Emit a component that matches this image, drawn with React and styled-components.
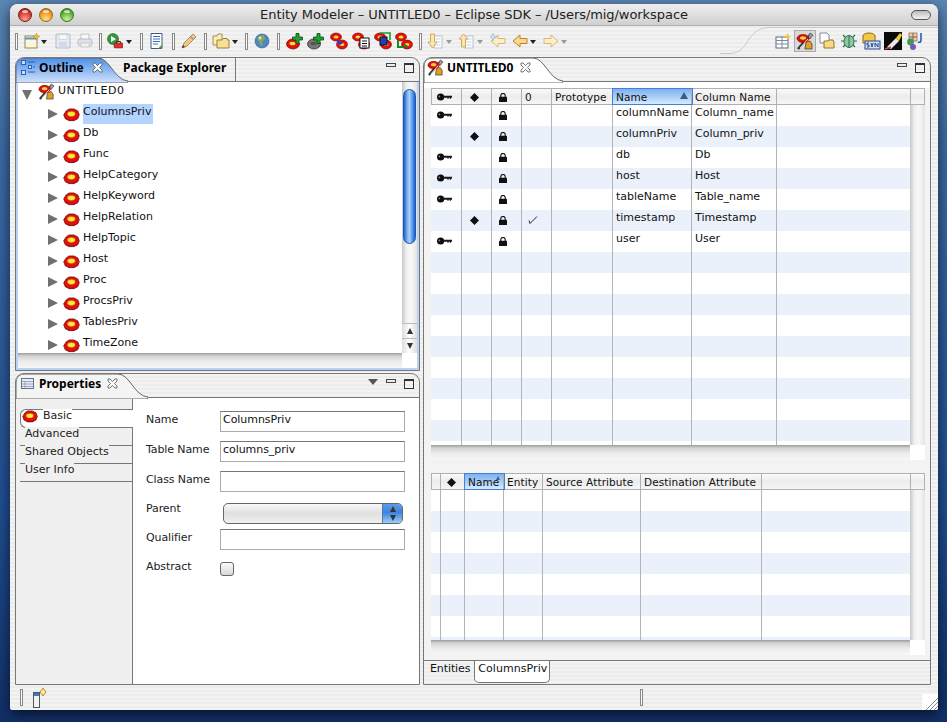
import React from "react";
import styled, { createGlobalStyle } from "styled-components";

const Global = createGlobalStyle`
  html, body { margin: 0; padding: 0; }
  body { width: 947px; height: 722px; overflow: hidden; font-family: "DejaVu Sans", "Liberation Sans", sans-serif; font-size: 11px; color: #111; }
  * { box-sizing: border-box; }
`;

const stripes = "repeating-linear-gradient(#f3f3f3 0 2px, #ececec 2px 4px)";

const Desktop = styled.div`
  width: 947px; height: 722px; padding: 4px 9px 12px 10px;
  background: linear-gradient(#5c86b4 0, #3c6ca6 20%, #1f4f92 70%, #123069 100%);
`;
const Win = styled.div`
  position: relative; width: 928px; height: 706px; display: flex; flex-direction: column;
  border-radius: 8px 8px 2px 2px; overflow: hidden; background: ${stripes};
  box-shadow: 0 4px 14px rgba(0,0,0,.65);
`;
const TitleBar = styled.div`
  position: relative; height: 22px; flex: none; display: flex; align-items: center; justify-content: center;
  background: linear-gradient(#eeeeee, #d0d0d0); border-bottom: 1px solid #b0b0b0;
  font-size: 13px; color: #222; letter-spacing: -.06px;
`;
const Lights = styled.div`
  position: absolute; left: 8px; top: 4px; display: flex; gap: 7px;
`;
const Light = styled.span`
  position: relative; width: 14px; height: 14px; border-radius: 50%; border: 1px solid ${p => p.$edge};
  background: radial-gradient(circle at 50% 85%, ${p => p.$hi} 0, ${p => p.$c} 60%, ${p => p.$d} 100%);
  &::after {
    content: ""; position: absolute; left: 3px; top: 1px; width: 6px; height: 3px; border-radius: 50%; background: rgba(255,255,255,.65);
  }
`;
const Pill = styled.span`
  position: absolute; right: 7px; top: 6px; width: 20px; height: 10px; border-radius: 5px; border: 1px solid #555;
  background: linear-gradient(#bbb, #f4f4f4);
`;
const ToolRow = styled.div`
  position: relative; height: 29px; flex: none; display: flex; align-items: center; padding: 1px 0 0 5px;
`;
const Handle = styled.span`
  width: 3px; height: 17px; flex: none; border: 1px solid #888; background: #fafafa;
  margin-left: ${p => p.$ml || 0}px;
`;
const Tool = styled.span`
  display: inline-flex; align-items: center; justify-content: center; flex: none;
  width: ${p => p.$w || 16}px; height: 20px; margin-left: ${p => p.$ml || 0}px;
  opacity: ${p => p.$dim ? .55 : 1};
`;
const Caret = styled.span`
  width: 0; height: 0; flex: none; border: 3px solid transparent; border-top: 4px solid ${p => p.$dim ? "#999" : "#222"};
  border-bottom: 0; margin: 2px 0 0 ${p => p.$ml || 0}px;
`;
const Spacer = styled.span`flex: 1;`;
const Curve = styled.svg`
  position: absolute; left: 710px; top: 1px;
`;
const Persp = styled.span`
  display: inline-flex; align-items: center; justify-content: center; width: 22px; height: 22px;
  border: ${p => p.$on ? "1px solid #aaa" : "0"}; background: ${p => p.$on ? "#d9d9d9" : "none"}; flex: none;
`;
const PerspSet = styled.div`
  display: flex; align-items: center; padding-right: 12px; position: relative;
`;

const Main = styled.div`
  flex: 1; min-height: 0; display: flex; gap: 3px; padding: 2px 7px 0 5px;
`;
const LeftCol = styled.div`
  width: 405px; display: flex; flex-direction: column; gap: 2px;
`;
const Panel = styled.div`
  display: flex; flex-direction: column; flex: ${p => p.$flex || "none"}; height: ${p => p.$h ? p.$h + "px" : "auto"};
  border: 1px solid #777; border-radius: 9px 9px 0 0; background: ${stripes}; overflow: hidden; min-width: 0;
`;
const TabHead = styled.div`
  height: 24px; flex: none; display: flex; align-items: flex-start; position: relative; border-bottom: 1px solid #777;
`;
const ViewTab = styled.div`
  position: relative; display: flex; align-items: center; height: 24px; padding: 0 0 5px ${p => p.$pl || 5}px;
  width: ${p => p.$w}px; flex: none; font-family: "Noto Sans", sans-serif; font-weight: bold; font-size: 12px; color: #000;
  letter-spacing: ${p => p.$ls || 0}px; z-index: 1;
`;
const TabText = styled.span`
  margin: 0 ${p => p.$mr}px 0 ${p => p.$ml}px;
`;
const TabShape = styled.svg`
  position: absolute; left: 0; top: 0; z-index: -1;
`;
const PlainTab = styled.div`
  display: flex; align-items: center; height: 23px; padding: 0 0 5px 0; margin-left: -5px; width: ${p => p.$w}px; flex: none;
  font-family: "Noto Sans", sans-serif; font-weight: bold; font-size: 12px;
  border-right: 1px solid #777; color: #000; z-index: 2;
`;
const ViewBtns = styled.div`
  position: absolute; right: 5px; top: 4px; display: flex; align-items: flex-start; gap: 8px;
`;
const MinBtn = styled.span`
  width: 10px; height: 4px; border: 1px solid #444; margin-top: 1px;
`;
const MaxBtn = styled.span`
  width: 10px; height: 10px; border: 1px solid #333; border-top-width: 2px; margin-top: 1px;
`;
const MenuBtn = styled.span`
  width: 0; height: 0; border: 5px solid transparent; border-top: 6px solid #555; border-bottom: 0; margin-top: 1px;
`;
const OutlineBody = styled.div`
  flex: 1; min-height: 0; display: flex; flex-direction: column; border: 2px solid #b9d1f5; border-top: 0; background: #fff;
`;
const TreeArea = styled.div`
  flex: 1; min-height: 0; display: flex;
`;
const Tree = styled.div`
  flex: 1; overflow: hidden; min-width: 0; padding-top: 1px;
`;
const RootRow = styled.div`
  height: 21px; display: flex; padding-left: 4px; align-items: flex-start;
`;
const TreeRow = styled.div`
  height: 21px; display: flex; align-items: flex-start; padding-left: 30px;
`;
const IconSlot = styled.span`
  display: inline-flex; flex: none; margin-top: ${p => p.$mt}px;
`;
const TreeLabel = styled.span`
  height: 20px; display: inline-block; margin-left: 3px; padding-top: 1px; line-height: 14px;
  background: ${p => p.$on ? "#b3d4ff" : "transparent"}; letter-spacing: ${p => p.$ls ?? 0}px; width: ${p => p.$on ? "70px" : "auto"};
`;
const Arrow = styled.span`
  width: 0; height: 0; flex: none; border-left: 10px solid #707070; border-top: 5.5px solid transparent; border-bottom: 5.5px solid transparent;
  margin: 5px 5px 0 0;
`;
const ArrowDown = styled.span`
  width: 0; height: 0; flex: none; border-top: 10px solid #707070; border-left: 5.5px solid transparent; border-right: 5.5px solid transparent;
  margin: 7px 6px 0 0;
`;
const VTrack = styled.div`
  width: ${p => p.$w || 15}px; flex: none; display: flex; flex-direction: column; align-items: center;
  background: linear-gradient(90deg, #c8c8c8, #f0f0f0 30%, #f8f8f8 60%, #e4e4e4);
`;
const Thumb = styled.div`
  width: 13px; height: 155px; margin-top: 7px; border-radius: 7px; border: 1px solid #1a55b8;
  background: linear-gradient(90deg, #1f63d2, #8dbcf2 35%, #a9d0f8 50%, #5c9ae8 75%, #1e62d0);
`;
const TrackGap = styled.div`flex: 1;`;
const ArrowBtn = styled.div`
  width: 15px; height: 15px; display: flex; align-items: center; justify-content: center; background: linear-gradient(90deg, #ddd, #fff 50%, #ddd);
  border-top: 1px solid #bbb;
`;
const UpTri = styled.span`
  width: 0; height: 0; border: 3.5px solid transparent; border-bottom: 6px solid #333; border-top: 0;
`;
const DownTri = styled.span`
  width: 0; height: 0; border: 3.5px solid transparent; border-top: 6px solid #333; border-bottom: 0;
`;
const HTrack = styled.div`
  height: 15px; flex: none; display: flex; justify-content: flex-end;
  background: linear-gradient(#9c9c9c 0, #d2d2d2 20%, #ececec 55%, #f6f6f6 100%);
`;
const Corner = styled.div`width: 15px; background: #fff;`;

const PropBody = styled.div`
  flex: 1; min-height: 0; display: flex; background: #fff;
`;
const SideTabs = styled.div`
  width: 117px; flex: none; background: #f0f0f0; border-right: 1px solid #777; padding-top: 11px;
`;
const SideTab = styled.div`
  display: flex; align-items: flex-start; height: 18px; margin: 0 -1px 0 4px; padding-left: 5px;
  border-bottom: 1px solid #777;
  ${p => p.$on && "height: 19px; background: #fff; border-top: 1px solid #777; border-left: 1px solid #777; border-radius: 6px 0 0 6px; padding-left: 1px; position: relative;"}
`;
const SideLabel = styled.span`
  position: relative; margin-top: -1px; height: 14px; line-height: 14px; color: #222; background: ${p => p.$on ? "#fff" : "#f0f0f0"};
  margin-left: ${p => p.$on ? 5 : 0}px;
`;
const Form = styled.div`
  flex: 1; padding: 13px 14px 0 13px;
`;
const FormRow = styled.div`
  display: flex; height: ${p => p.$h}px; align-items: flex-start;
`;
const FormLabel = styled.label`
  width: 74px; flex: none; padding-top: ${p => p.$pt ?? 0}px; line-height: 14px; letter-spacing: -.1px; color: #222;
`;
const Field = styled.div`
  width: 185px; height: 21px; border: 1px solid #aaa; border-top-color: #777; padding: 0 2px; line-height: 15px; letter-spacing: -.05px; background: #fff; color: #111;
`;
const Select = styled.div`
  width: 180px; height: 21px; margin: 2px 0 0 3px; display: flex; justify-content: flex-end; border: 1px solid #666; border-radius: 5px; overflow: hidden;
  background: linear-gradient(#f8f8f8, #e0e0e0 50%, #f0f0f0);
`;
const SelectBtn = styled.div`
  width: 20px; display: flex; flex-direction: column; align-items: center; justify-content: center; gap: 3px;
  background: linear-gradient(#5e9be8, #3f83dd 45%, #9bcdf8 100%); border-left: 1px solid #5577aa;
`;
const Check = styled.span`
  display: block; width: 14px; height: 14px; margin-top: 4px; border: 1px solid #666; border-radius: 3px;
  background: linear-gradient(#fafafa, #d9d9d9);
`;

const RightPanel = styled(Panel)`flex: 1;`;
const EditorArea = styled.div`
  flex: 1; min-height: 0; display: flex; flex-direction: column; padding: 0 5px 0 7px;
  background: #f3f3f3;
`;
const WhiteStrip = styled.div`
  height: 6px; flex: none; margin: 0 -5px 0 -7px; background: #fff;
`;
const TableWrap = styled.div`
  display: flex; flex-direction: column; flex: none; height: ${p => p.$h}px; margin-top: ${p => p.$mt || 0}px;
`;
const HeadRow = styled.div`
  height: 17px; flex: none; display: flex; border: 1px solid #b0b0b0; background: linear-gradient(#fafafa, #ececec 50%, #f6f6f6);
`;
const HeadCell = styled.div`
  position: relative; width: ${p => p.$w}px; flex: none; display: flex; align-items: center;
  padding-left: ${p => p.$pad ?? 3}px; border-right: 1px solid #b0b0b0; letter-spacing: .1px; font-size: 10.5px; white-space: nowrap; line-height: 14px; padding-top: 1px;
  ${p => p.$on && "background: linear-gradient(#7fb0ee, #a8cdf6 50%, #d6ebff); box-shadow: 0 0 0 1px #3d80df;"}
`;
const SortTri = styled.span`
  position: absolute; right: 3px; top: ${p => p.$small ? 2 : 3}px; width: 0; height: 0;
  border: ${p => p.$small ? 2 : 4}px solid transparent; border-bottom: ${p => p.$small ? 4 : 7}px solid #3a5a8a; border-top: 0;
`;
const RowsArea = styled.div`
  flex: 1; min-height: 0; display: flex;
`;
const Rows = styled.div`
  flex: 1; min-width: 0; overflow: hidden;
`;
const Row = styled.div`
  height: 21px; display: flex; padding-left: 1px; background: ${p => p.$alt ? "#ebf1fb" : "#fff"};
`;
const Cell = styled.div`
  width: ${p => p.$w}px; flex: none; display: flex;
  padding: ${p => p.$pad != null ? `6px 0 0 ${p.$pad}px` : "1px 0 0 3px"}; border-right: 1px solid #b4b4b4; line-height: 14px; white-space: nowrap; overflow: hidden;
`;
const BottomTabs = styled.div`
  flex: 1; display: flex; align-items: flex-start; margin: 5px -5px 0 -7px; border-top: 1px solid #777; background: ${stripes};
`;
const EdTab = styled.div`
  height: 22px; padding: 0 2px 0 ${p => p.$on ? 3 : 6}px; line-height: 15px; flex: none; letter-spacing: ${p => p.$on ? .05 : -.1}px;
  ${p => p.$on && "background: #fff; border: 1px solid #777; border-top: 0; border-radius: 0 0 5px 5px; margin-left: 2px;"}
`;
const StatusBar = styled.div`
  height: 25px; flex: none; display: flex; align-items: center; padding-left: 10px; position: relative;
`;
const StatusGap = styled.span`width: ${p => p.$w}px; flex: none;`;
const Grip = styled.svg`
  position: absolute; right: 0; bottom: 0;
`;

/* ---------- drawings ---------- */
const Entity = ({ w = 17 }) => (
  <svg width={w} height={w * 0.8} viewBox="0 0 17 14" style={{ flex: "none" }}>
    <path d="M3 3 L6 1 L11 1 L15 3 L16.5 7 L15 11 L11 13 L6 13 L2 11 L.5 7Z" fill="#e01010" stroke="#7a0505" strokeWidth=".8" />
    <path d="M2 10 Q8 15 15 10 L11 13 L6 13Z" fill="#8a0808" />
    <ellipse cx="8.3" cy="6.2" rx="4" ry="2.5" fill="#ffe83a" stroke="#b08800" strokeWidth=".4" />
  </svg>
);
const Modeler = ({ s = 18 }) => (
  <svg width={s} height={s} viewBox="0 0 18 18" style={{ flex: "none" }}>
    <path d="M10 10 L14 9 L16 12 L16 17 L9 17Z" fill="#e0a020" stroke="#333" strokeWidth=".7" />
    <path d="M2 17 L14 3" stroke="#333" strokeWidth="2.4" />
    <path d="M14 1 L17 3 L14 7 L12 5Z" fill="#999" stroke="#333" strokeWidth=".6" />
    <ellipse cx="7" cy="6.5" rx="6" ry="4" fill="#d81010" stroke="#700" strokeWidth=".6" />
    <ellipse cx="7" cy="6" rx="3" ry="1.7" fill="#f6d040" />
    <path d="M4 16 L12 7" stroke="#eee" strokeWidth=".9" />
  </svg>
);
const Key = () => (
  <svg width="15" height="8" viewBox="0 0 15 8" style={{ flex: "none" }}>
    <ellipse cx="3.6" cy="4" rx="3.6" ry="3.6" fill="#0c0c0c" />
    <path d="M6 2.8 H15 V4.8 H14 V5.8 H12.8 V4.8 H11.6 V5.8 H10.4 V4.8 H6Z" fill="#1a1a1a" />
    <circle cx="2.4" cy="3.4" r=".9" fill="#888" />
  </svg>
);
const Diamond = () => (
  <svg width="9" height="9" viewBox="0 0 9 9" style={{ flex: "none" }}><path d="M4.5 0 L9 4.5 L4.5 9 L0 4.5Z" fill="#111" /></svg>
);
const Lock = () => (
  <svg width="8" height="9" viewBox="0 0 8 9" style={{ flex: "none" }}>
    <path d="M1.8 4 V2.6 A2.2 2.2 0 0 1 6.2 2.6 V4" fill="none" stroke="#111" strokeWidth="1.1" />
    <rect x="0" y="3.8" width="8" height="5.2" rx=".6" fill="#111" />
  </svg>
);
const Tick = () => (
  <svg width="10" height="8" viewBox="0 0 10 8" style={{ flex: "none" }}>
    <path d="M1 4.5 L2 7.5 L9 .5" fill="none" stroke="#222" strokeWidth="1" />
  </svg>
);
const CloseX = () => (
  <svg width="11" height="11" viewBox="0 0 11 11" style={{ flex: "none" }}>
    <path d="M1 1 L3 1 L5.5 3.5 L8 1 L10 1 L10 3 L7.5 5.5 L10 8 L10 10 L8 10 L5.5 7.5 L3 10 L1 10 L1 8 L3.5 5.5 L1 3Z" fill="#f8f8f8" stroke="#555" strokeWidth=".8" />
  </svg>
);
const OutlineIco = () => (
  <svg width="14" height="15" viewBox="0 0 14 15" style={{ flex: "none" }}>
    <g fill="#cfe0fa" stroke="#2860b8" strokeWidth="1">
      <rect x=".5" y=".5" width="4" height="4" /><rect x=".5" y="10.5" width="4" height="4" /><rect x="7.5" y="5.5" width="3" height="3" />
    </g>
    <path d="M7 2 H14 M12 7 H14 M7 12 H14" stroke="#2860b8" strokeWidth="1" />
  </svg>
);
const PropsIco = () => (
  <svg width="13" height="11" viewBox="0 0 13 11" style={{ flex: "none" }}>
    <rect x=".5" y=".5" width="12" height="10" fill="#e6edf6" stroke="#66748a" />
    <path d="M1 3.5 H12 M1 6 H12 M1 8.5 H12 M4 3 V10" stroke="#8a97ab" strokeWidth=".8" />
  </svg>
);
const Svg = ({ children, w = 16, h = 16 }) => <svg width={w} height={h} viewBox={`0 0 ${w} ${h}`}>{children}</svg>;
const IcoNew = () => <Svg><rect x="1" y="3" width="12" height="12" fill="#fbf6d8" stroke="#8a8a60" /><path d="M1 5.5 H13" stroke="#6b8cc0" strokeWidth="2" /><path d="M12.5 0 L13.5 2.5 L16 3.5 L13.5 4.5 L12.5 7 L11.5 4.5 L9 3.5 L11.5 2.5Z" fill="#f4c820" stroke="#a07810" strokeWidth=".4" /></Svg>;
const IcoSave = () => <Svg><rect x="1" y="1" width="14" height="14" rx="1" fill="#dfe8f4" stroke="#7b93b8" /><rect x="4" y="1.5" width="8" height="5" fill="#fff" stroke="#9ab" strokeWidth=".6" /><rect x="4" y="9" width="8" height="6" fill="#b9c9e0" /></Svg>;
const IcoPrint = () => <Svg><path d="M4 1 H12 V7 H4Z" fill="#fff" stroke="#99a" /><rect x="1" y="6" width="14" height="7" rx="2" fill="#cdd6e4" stroke="#8c9ab0" /><rect x="4" y="10" width="8" height="4" fill="#eee" stroke="#99a" strokeWidth=".6" /></Svg>;
const IcoRun = () => <Svg><circle cx="6" cy="6" r="5.5" fill="#2e9a3c" stroke="#175c20" strokeWidth=".6" /><path d="M4 3 L9 6 L4 9Z" fill="#fff" /><rect x="7" y="10" width="9" height="5" rx="1" fill="#d83030" stroke="#701010" strokeWidth=".5" /><path d="M9.5 10 V8.5 H13.5 V10" fill="none" stroke="#701010" /></Svg>;
const IcoDoc = () => <Svg><path d="M2 .5 H13 V15.5 H2Z" fill="#fff" stroke="#3c5a80" /><path d="M4 3.5 H11 M4 6 H11 M4 8.5 H11 M4 11 H9" stroke="#3c6cc0" /><path d="M9 15.5 L13 11.5 V15.5Z" fill="#4a9a4a" /></Svg>;
const IcoPencil = () => <Svg><path d="M1 15 L3 10 L12 1 L15 4 L6 13Z" fill="#f2c78a" stroke="#a67830" strokeWidth=".8" /><path d="M9.5 3.5 L12.5 6.5" stroke="#999" strokeWidth="1.6" /><path d="M1 15 L2 12 L4 14Z" fill="#333" /></Svg>;
const IcoFolder = () => <svg width="18" height="16" viewBox="0 0 18 16"><path d="M1 3 H5 L6 1 H10 V12 H1Z" fill="#fbeeb8" stroke="#a88c50" /><path d="M5 7 H10 L11 5.5 H15 L15.5 7 H17 V15 H5Z" fill="#f7e09a" stroke="#a07c30" /></svg>;
const IcoGlobe = () => <Svg><circle cx="8" cy="8" r="7" fill="#4a86c8" stroke="#2b5a90" strokeWidth=".6" /><path d="M5 3 L10 2 L11 6 L8 9 L9 13 L6 12 L5 8 L3 6Z" fill="#8aa850" /><circle cx="6" cy="5" r="1.4" fill="#fff" opacity=".7" /></Svg>;
const IcoAdd = ({ v = 0 }) => (
  <svg width="18" height="18" viewBox="0 0 18 18">
    {v === 1
      ? <ellipse cx="7" cy="12" rx="6.5" ry="5" fill="#777" stroke="#222" strokeWidth=".7" />
      : <ellipse cx="7" cy="12" rx="6.5" ry="5" fill="#e01010" stroke="#700" strokeWidth=".7" />}
    <ellipse cx="6.5" cy="11.5" rx="3" ry="1.8" fill={v === 1 ? "#555" : "#f8dc30"} />
    <path d="M10 1.5 H13 V5 H16.5 V8 H13 V11.5 H10 V8 H6.5 V5 H10Z" fill="#22a030" stroke="#0a4a10" strokeWidth=".8" />
  </svg>
);
const IcoBlob2 = ({ v }) => (
  <svg width="18" height="18" viewBox="0 0 18 18">
    <ellipse cx="6" cy="5" rx="5.5" ry="4" fill="#e01010" stroke="#700" strokeWidth=".6" />
    <ellipse cx="12" cy="12.5" rx="5.5" ry="4.5" fill="#e01010" stroke="#700" strokeWidth=".6" />
    <ellipse cx="6" cy="5" rx="2.5" ry="1.5" fill="#f8dc30" />
    <ellipse cx="12" cy="12.5" rx="2.5" ry="1.5" fill="#f8dc30" />
    {v === 1 && <path d="M5 7 L13 11 L10 13Z" fill="#1c40d8" />}
    {v === 2 && <g><rect x="8" y="6" width="9" height="10" fill="#fff" stroke="#111" /><path d="M10 9 H15 M10 11.5 H15 M10 14 H15" stroke="#111" /></g>}
    {v === 3 && <g><rect x="6" y="5" width="7" height="8" fill="#2040b0" stroke="#111" /><path d="M6 1 H16 V8" fill="none" stroke="#1a9a30" strokeWidth="1.6" /></g>}
    {v === 4 && <g><path d="M3 8 V15 H9 M9 12.5 L13 15" fill="none" stroke="#1a8a20" strokeWidth="2" /></g>}
  </svg>
);
const IcoDown = ({ up }) => (
  <Svg>
    <rect x="7" y="3" width="8" height="12" fill="#fff" stroke="#b8c2d2" />
    <path d="M8.5 6 H13.5 M8.5 9 H13.5 M8.5 12 H13.5" stroke="#c5cfde" />
    {up
      ? <path d="M5.5 1 L10 6 H7.5 V14 H3.5 V6 H1Z" fill="#fbe6b0" stroke="#cfa860" />
      : <path d="M3.5 1 H7.5 V9 H10 L5.5 15 L1 9 H3.5Z" fill="#fbe6b0" stroke="#cfa860" />}
  </Svg>
);
const IcoLeft = ({ dim, star }) => (
  <Svg>
    <path d="M1 8 L8 2 V5.5 H15 V10.5 H8 V14Z" fill={dim ? "#fdeec8" : "#fbd98a"} stroke={dim ? "#d8b878" : "#b8822a"} />
    {star && <path d="M3 0 L4 3 L7 4 L4 5 L3 8 L2 5 L-1 4 L2 3Z" fill="#cfe0f8" stroke="#7b9bd0" strokeWidth=".4" />}
  </Svg>
);
const IcoRight = () => <Svg><path d="M15 8 L8 2 V5.5 H1 V10.5 H8 V14Z" fill="#fdeec8" stroke="#d8b878" /></Svg>;
const PTable = () => <Svg><rect x="1" y="4" width="12" height="11" fill="#fff" stroke="#5a6a80" /><path d="M1 7.5 H13 M1 11 H13 M7 4 V15" stroke="#7a8aa0" /><path d="M12.5 0 L13.5 2.5 L16 3.5 L13.5 4.5 L12.5 7 L11.5 4.5 L9 3.5 L11.5 2.5Z" fill="#f4c820" /></Svg>;
const PFolder = () => <svg width="18" height="18" viewBox="0 0 18 18"><path d="M2 1 H9 L11 3 V11 H2Z" fill="#fff" stroke="#7a8aa0" /><path d="M6 9 H10 L11 8 H15 L16 10 V16 H6Z" fill="#f7d98a" stroke="#9a7020" /></svg>;
const PBug = () => <svg width="18" height="18" viewBox="0 0 18 18"><path d="M3 3 L6 6 M15 3 L12 6 M1 9 H4 M14 9 H17 M3 15 L6 12 M15 15 L12 12" stroke="#2a6a50" strokeWidth="1.2" /><ellipse cx="9" cy="9.5" rx="5" ry="6" fill="#8fc8a0" stroke="#2a6a50" /><path d="M9 4 V15" stroke="#2a6a50" /></svg>;
const PSvn = () => <svg width="20" height="18" viewBox="0 0 20 18"><ellipse cx="8" cy="4" rx="6" ry="3" fill="#f4c840" stroke="#8a6a10" /><path d="M2 4 V11 H14 V4" fill="#f4c840" stroke="#8a6a10" /><rect x="4" y="9" width="15" height="8" fill="#cfe0f4" stroke="#2a4a80" /><path d="M6 15 H8 V13 H6 V11 H8 M10 11 L11 15 L12 11 M14 15 V11 L17 15 V11" fill="none" stroke="#1a3a80" strokeWidth=".9" /></svg>;
const PMark = () => <svg width="18" height="18" viewBox="0 0 18 18"><rect width="18" height="18" fill="#0a0a0a" /><path d="M3 15 L12 6 L15 9 L7 17Z" fill="#e8e8e8" /><path d="M12 6 L16 1 L18 3 L15 9Z" fill="#f4d020" /><path d="M1 17 L7 15" stroke="#e04040" strokeWidth="1.4" /></svg>;
const PJava = () => <svg width="18" height="18" viewBox="0 0 18 18"><rect x="3" y="1" width="8" height="8" fill="#e8d0c0" stroke="#8a5a3a" strokeWidth=".7" /><path d="M7 1 V9 M3 5 H11" stroke="#8a5a3a" /><circle cx="4.5" cy="10" r="3.4" fill="#3c9a58" /><circle cx="7" cy="15" r="3" fill="#7858b8" /><path d="M15 1 V8 Q15 11 12 10" fill="none" stroke="#2a5ab8" strokeWidth="1.6" /></svg>;
const Widget = () => <svg width="16" height="20" viewBox="0 0 16 20"><rect x=".5" y="4.5" width="6" height="15" fill="#eef2f8" stroke="#555" /><rect x="1" y="5" width="5" height="3" fill="#3c78c8" /><path d="M10 0 L13 4 L10 8 L7 4Z" fill="#f8e8a0" stroke="#c08a20" /></svg>;

/* ---------- data ---------- */
const treeItems = ["ColumnsPriv", "Db", "Func", "HelpCategory", "HelpKeyword", "HelpRelation", "HelpTopic", "Host", "Proc", "ProcsPriv", "TablesPriv", "TimeZone"];
const topCols = [30, 30, 30, 30, 61, 79, 85, 134];
const iconPad = [5, 8, 7, 6];
const topHead = [<Key />, <Diamond />, <Lock />, "0", "Prototype", "Name", "Column Name", ""];
const attrs = [
  { k: 1, n: "columnName", c: "Column_name" },
  { d: 1, n: "columnPriv", c: "Column_priv" },
  { k: 1, n: "db", c: "Db" },
  { k: 1, n: "host", c: "Host" },
  { k: 1, n: "tableName", c: "Table_name" },
  { d: 1, t: 1, n: "timestamp", c: "Timestamp" },
  { k: 1, n: "user", c: "User" },
];
const botCols = [9, 24, 39, 39, 98, 121, 149];
const botHead = ["", <Diamond />, "Name", "Entity", "Source Attribute", "Destination Attribute", ""];

const tabPath = (w) => `M0 24 V9 Q0 0 9 0 H${w - 30} C${w - 18} 0 ${w - 14} 22 ${w} 23 V25 H0 Z`;

export default function App() {
  return (
    <Desktop>
      <Global />
      <Win>
        <TitleBar>
          <Lights>
            <Light $c="#d83a30" $d="#8a1410" $hi="#ffa090" $edge="#7a1a16" />
            <Light $c="#ef9a20" $d="#a8600c" $hi="#ffdc90" $edge="#9a6a10" />
            <Light $c="#5cb030" $d="#2e7412" $hi="#c8f4a0" $edge="#3a7a1c" />
          </Lights>
          Entity Modeler – UNTITLED0 – Eclipse SDK – /Users/mig/workspace
          <Pill />
        </TitleBar>
        <ToolRow>
          <Handle />
          <Tool $ml={6}><IcoNew /></Tool><Caret $ml={1} />
          <Tool $dim $ml={8}><IcoSave /></Tool>
          <Tool $dim $ml={6}><IcoPrint /></Tool>
          <Handle $ml={6} />
          <Tool $ml={5}><IcoRun /></Tool><Caret $ml={3} />
          <Handle $ml={8} />
          <Tool $ml={6}><IcoDoc /></Tool>
          <Handle $ml={7} />
          <Tool $ml={6}><IcoPencil /></Tool>
          <Handle $ml={7} />
          <Tool $ml={5} $w={18}><IcoFolder /></Tool><Caret $ml={2} />
          <Handle $ml={7} />
          <Tool $ml={6}><IcoGlobe /></Tool>
          <Handle $ml={7} />
          <Tool $ml={6} $w={18}><IcoAdd /></Tool>
          <Tool $ml={3} $w={18}><IcoAdd v={1} /></Tool>
          <Tool $ml={5} $w={18}><IcoBlob2 v={1} /></Tool>
          <Tool $ml={4} $w={18}><IcoBlob2 v={2} /></Tool>
          <Tool $ml={4} $w={18}><IcoBlob2 v={3} /></Tool>
          <Tool $ml={3} $w={18}><IcoBlob2 v={4} /></Tool>
          <Handle $ml={6} />
          <Tool $ml={5}><IcoDown /></Tool><Caret $dim $ml={3} />
          <Tool $ml={6}><IcoDown up /></Tool><Caret $dim $ml={3} />
          <Tool $ml={7}><IcoLeft dim star /></Tool>
          <Tool $ml={6}><IcoLeft /></Tool><Caret $ml={2} />
          <Tool $ml={7}><IcoRight /></Tool><Caret $dim $ml={2} />
          <Spacer />
          <Curve width="218" height="28" viewBox="0 0 218 28">
            <path d="M0 26.5 H10 C 30 26.5 25 .5 50 .5 H218" fill="none" stroke="#c8c8c8" strokeWidth="1" />
          </Curve>
          <PerspSet>
            <Persp><PTable /></Persp>
            <Persp $on><Modeler s={18} /></Persp>
            <Persp><PFolder /></Persp>
            <Persp><PBug /></Persp>
            <Persp><PSvn /></Persp>
            <Persp><PMark /></Persp>
            <Persp><PJava /></Persp>
          </PerspSet>
        </ToolRow>
        <Main>
          <LeftCol>
            <Panel $h={314}>
              <TabHead>
                <ViewTab $w={112}>
                  <TabShape width="112" height="25" viewBox="0 0 112 25">
                    <defs>
                      <linearGradient id="blueTab" x1="0" y1="0" x2="0" y2="1">
                        <stop offset="0" stopColor="#4d8fe8" /><stop offset="1" stopColor="#d3e3fb" />
                      </linearGradient>
                    </defs>
                    <path d={tabPath(112)} fill="url(#blueTab)" stroke="#666" />
                  </TabShape>
                  <OutlineIco />
                  <TabText $ml={4} $mr={8}>Outline</TabText>
                  <CloseX />
                </ViewTab>
                <PlainTab $w={113}>Package Explorer</PlainTab>
                <ViewBtns><MinBtn /><MaxBtn /></ViewBtns>
              </TabHead>
              <OutlineBody>
                <TreeArea>
                  <Tree>
                    <RootRow>
                      <ArrowDown />
                      <IconSlot $mt={0}><Modeler s={17} /></IconSlot>
                      <TreeLabel $ls={.55}>UNTITLED0</TreeLabel>
                    </RootRow>
                    {treeItems.map((t, i) => (
                      <TreeRow key={t}>
                        <Arrow />
                        <IconSlot $mt={4}><Entity /></IconSlot>
                        <TreeLabel $on={i === 0}>{t}</TreeLabel>
                      </TreeRow>
                    ))}
                  </Tree>
                  <VTrack>
                    <Thumb />
                    <TrackGap />
                    <ArrowBtn><UpTri /></ArrowBtn>
                    <ArrowBtn><DownTri /></ArrowBtn>
                  </VTrack>
                </TreeArea>
                <HTrack><Corner /></HTrack>
              </OutlineBody>
            </Panel>
            <Panel $flex="1">
              <TabHead>
                <ViewTab $w={132}>
                  <TabShape width="132" height="25" viewBox="0 0 132 25">
                    <path d={tabPath(132)} fill="#f4f4f4" stroke="#666" />
                  </TabShape>
                  <PropsIco />
                  <TabText $ml={5} $mr={6}>Properties</TabText>
                  <CloseX />
                </ViewTab>
                <ViewBtns><MenuBtn /><MinBtn /><MaxBtn /></ViewBtns>
              </TabHead>
              <PropBody>
                <SideTabs>
                  <SideTab $on><Entity w={16} /><SideLabel $on>Basic</SideLabel></SideTab>
                  <SideTab><SideLabel>Advanced</SideLabel></SideTab>
                  <SideTab><SideLabel>Shared Objects</SideLabel></SideTab>
                  <SideTab><SideLabel>User Info</SideLabel></SideTab>
                </SideTabs>
                <Form>
                  <FormRow $h={30}><FormLabel $pt={2}>Name</FormLabel><Field>ColumnsPriv</Field></FormRow>
                  <FormRow $h={30}><FormLabel $pt={2}>Table Name</FormLabel><Field>columns_priv</Field></FormRow>
                  <FormRow $h={30}><FormLabel $pt={2}>Class Name</FormLabel><Field /></FormRow>
                  <FormRow $h={28}><FormLabel $pt={1}>Parent</FormLabel><Select><SelectBtn><UpTri /><DownTri /></SelectBtn></Select></FormRow>
                  <FormRow $h={29}><FormLabel $pt={2}>Qualifier</FormLabel><Field /></FormRow>
                  <FormRow $h={30}><FormLabel $pt={2}>Abstract</FormLabel><Check /></FormRow>
                </Form>
              </PropBody>
            </Panel>
          </LeftCol>
          <RightPanel>
            <TabHead>
              <ViewTab $w={139} $pl={3}>
                <TabShape width="139" height="25" viewBox="0 0 139 25">
                  <path d={tabPath(139)} fill="#fff" stroke="#666" />
                </TabShape>
                <Modeler s={17} />
                <TabText $ml={3} $mr={7}>UNTITLED0</TabText>
                <CloseX />
              </ViewTab>
              <ViewBtns><MinBtn /><MaxBtn /></ViewBtns>
            </TabHead>
            <EditorArea>
              <WhiteStrip />
              <TableWrap $h={372}>
                <HeadRow>
                  {topHead.map((h, i) => (
                    <HeadCell key={i} $w={topCols[i]} $pad={i < 3 ? iconPad[i] : undefined} $on={i === 5}>
                      {h}{i === 5 && <SortTri />}
                    </HeadCell>
                  ))}
                </HeadRow>
                <RowsArea>
                  <Rows>
                    {Array.from({ length: 17 }).map((_, i) => {
                      const a = attrs[i] || {};
                      return (
                        <Row key={i} $alt={i % 2 === 1}>
                          <Cell $w={topCols[0]} $pad={iconPad[0]}>{a.k && <Key />}</Cell>
                          <Cell $w={topCols[1]} $pad={iconPad[1]}>{a.d && <Diamond />}</Cell>
                          <Cell $w={topCols[2]} $pad={iconPad[2]}>{a.n && <Lock />}</Cell>
                          <Cell $w={topCols[3]} $pad={iconPad[3]}>{a.t && <Tick />}</Cell>
                          <Cell $w={topCols[4]} />
                          <Cell $w={topCols[5]}>{a.n}</Cell>
                          <Cell $w={topCols[6]}>{a.c}</Cell>
                          <Cell $w={134} />
                        </Row>
                      );
                    })}
                  </Rows>
                  <VTrack />
                </RowsArea>
                <HTrack><Corner /></HTrack>
              </TableWrap>
              <TableWrap $h={182} $mt={13}>
                <HeadRow>
                  {botHead.map((h, i) => (
                    <HeadCell key={i} $w={botCols[i]} $pad={i === 1 ? 6 : undefined} $on={i === 2}>
                      {h}{i === 2 && <SortTri $small />}
                    </HeadCell>
                  ))}
                </HeadRow>
                <RowsArea>
                  <Rows>
                    {Array.from({ length: 8 }).map((_, i) => (
                      <Row key={i} $alt={i % 2 === 1}>
                        {botCols.map((w, j) => <Cell key={j} $w={w} />)}
                      </Row>
                    ))}
                  </Rows>
                  <VTrack />
                </RowsArea>
                <HTrack><Corner /></HTrack>
              </TableWrap>
              <BottomTabs>
                <EdTab>Entities</EdTab>
                <EdTab $on>ColumnsPriv</EdTab>
              </BottomTabs>
            </EditorArea>
          </RightPanel>
        </Main>
        <StatusBar>
          <Handle />
          <StatusGap $w={10} />
          <Widget />
          <StatusGap $w={591} />
          <Handle />
          <Grip width="16" height="16" viewBox="0 0 16 16">
            <rect width="16" height="16" fill="#fff" />
            <path d="M4 16 L16 4 M8 16 L16 8 M12 16 L16 12" stroke="#888" />
          </Grip>
        </StatusBar>
      </Win>
    </Desktop>
  );
}
